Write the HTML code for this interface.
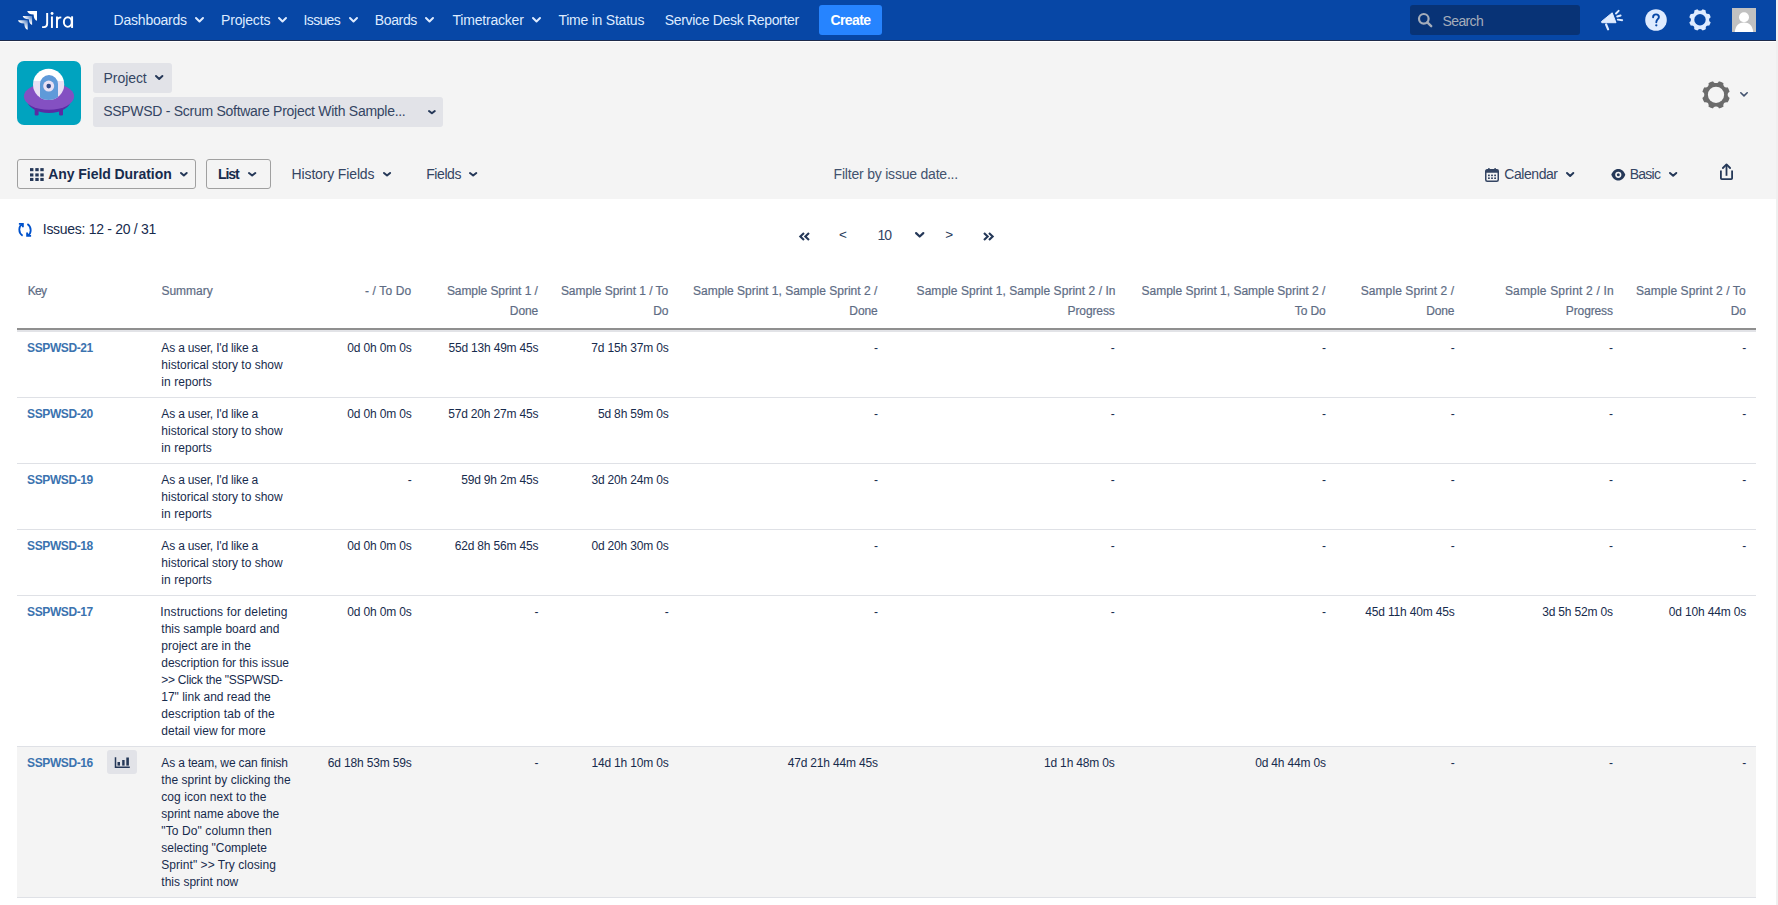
<!DOCTYPE html>
<html><head><meta charset="utf-8"><title>Jira - Time in Status</title>
<style>
html,body{margin:0;padding:0;}
body{width:1778px;height:905px;overflow:hidden;position:relative;background:#fff;font-family:"Liberation Sans", sans-serif;}
.t{position:absolute;white-space:nowrap;}
.r{position:absolute;}
svg.r{overflow:visible;}
</style></head><body>
<div class="r" style="left:0px;top:0px;width:1776px;height:40px;background:#0747a6;"></div>
<div class="r" style="left:0px;top:40px;width:1776px;height:1px;background:#1d2b4a;"></div>
<div class="r" style="left:0px;top:41px;width:1776px;height:1px;background:#ffffff;"></div>
<div class="r" style="left:0px;top:42px;width:1776px;height:157px;background:#f4f4f4;"></div>
<div class="r" style="left:1776px;top:0px;width:2px;height:905px;background:#f0f0f0;"></div>
<svg class="r" style="left:15px;top:8px" width="25" height="25" viewBox="0 0 25 25">
<defs>
<radialGradient id="g1" cx="1" cy="0" r="1.2"><stop offset="0" stop-color="#fff" stop-opacity="0.25"/><stop offset="0.4" stop-color="#fff" stop-opacity="0.7"/><stop offset="0.75" stop-color="#fff"/></radialGradient>
</defs>
<path d="M12.2 3 L22 3 L22 12.7 C20.2 12.4 18.8 10.6 18.6 6.5 C14.5 6.3 12.6 5 12.2 3 Z" fill="#fff"/>
<path d="M7.7 8 L17.1 8 L17.1 16.9 C15.4 16.6 14 14.8 13.8 11.3 C9.9 11.1 8.1 9.9 7.7 8 Z" fill="url(#g1)"/>
<path d="M3 12.2 L12.7 12.2 L12.7 21.8 C11 21.5 9.5 19.7 9.3 15.6 C5.2 15.4 3.4 14.1 3 12.2 Z" fill="url(#g1)"/>
</svg>
<svg class="r" style="left:40px;top:8px" width="36" height="24" viewBox="0 0 36 24">
<g fill="none" stroke="#fff" stroke-width="1.95">
<path d="M7.16 5.04 L7.16 15.6 C7.16 18.3 5.9 19.1 4 19.1 L2.1 19.1"/>
<path d="M11.93 8.45 L11.93 19.95"/>
<path d="M16.97 8.45 L16.97 19.95 M16.97 13.6 C16.97 10.5 18.5 9.35 21.3 9.35"/>
<ellipse cx="27.8" cy="14.05" rx="3.95" ry="4.8"/>
<path d="M32.08 8.3 L32.08 19.95"/>
</g>
<circle cx="12.06" cy="5.43" r="1.45" fill="#fff"/>
</svg>
<div class="t" style="left:113.60px;top:13.35px;font-size:14px;line-height:14px;color:#deebff;font-weight:400;letter-spacing:-0.221px;">Dashboards</div>
<svg class="r" style="left:194px;top:16px" width="11" height="7.5" viewBox="-1 -1 11 7.5"><path d="M1.0 1.0 L4.5 4.5 L8.0 1.0" fill="none" stroke="#deebff" stroke-width="2" stroke-linecap="round" stroke-linejoin="round"/></svg>
<div class="t" style="left:221.00px;top:13.35px;font-size:14px;line-height:14px;color:#deebff;font-weight:400;letter-spacing:-0.167px;">Projects</div>
<svg class="r" style="left:277px;top:16px" width="11" height="7.5" viewBox="-1 -1 11 7.5"><path d="M1.0 1.0 L4.5 4.5 L8.0 1.0" fill="none" stroke="#deebff" stroke-width="2" stroke-linecap="round" stroke-linejoin="round"/></svg>
<div class="t" style="left:303.60px;top:13.35px;font-size:14px;line-height:14px;color:#deebff;font-weight:400;letter-spacing:-0.672px;">Issues</div>
<svg class="r" style="left:348px;top:16px" width="11" height="7.5" viewBox="-1 -1 11 7.5"><path d="M1.0 1.0 L4.5 4.5 L8.0 1.0" fill="none" stroke="#deebff" stroke-width="2" stroke-linecap="round" stroke-linejoin="round"/></svg>
<div class="t" style="left:374.80px;top:13.35px;font-size:14px;line-height:14px;color:#deebff;font-weight:400;letter-spacing:-0.372px;">Boards</div>
<svg class="r" style="left:424px;top:16px" width="11" height="7.5" viewBox="-1 -1 11 7.5"><path d="M1.0 1.0 L4.5 4.5 L8.0 1.0" fill="none" stroke="#deebff" stroke-width="2" stroke-linecap="round" stroke-linejoin="round"/></svg>
<div class="t" style="left:452.50px;top:13.35px;font-size:14px;line-height:14px;color:#deebff;font-weight:400;letter-spacing:-0.201px;">Timetracker</div>
<svg class="r" style="left:531px;top:16px" width="11" height="7.5" viewBox="-1 -1 11 7.5"><path d="M1.0 1.0 L4.5 4.5 L8.0 1.0" fill="none" stroke="#deebff" stroke-width="2" stroke-linecap="round" stroke-linejoin="round"/></svg>
<div class="t" style="left:558.40px;top:13.35px;font-size:14px;line-height:14px;color:#deebff;font-weight:400;letter-spacing:-0.227px;">Time in Status</div>
<div class="t" style="left:664.70px;top:13.35px;font-size:14px;line-height:14px;color:#deebff;font-weight:400;letter-spacing:-0.318px;">Service Desk Reporter</div>
<div class="r" style="left:819px;top:5px;width:63px;height:30px;background:#2684ff;border-radius:3px"></div>
<div class="t" style="left:830.40px;top:13.35px;font-size:14px;line-height:14px;color:#ffffff;font-weight:700;letter-spacing:-0.599px;">Create</div>
<div class="r" style="left:1410px;top:5px;width:170px;height:30px;background:#083376;border-radius:3px"></div>
<svg class="r" style="left:1417px;top:12px" width="16" height="16" viewBox="0 0 16 16"><circle cx="6.8" cy="6.8" r="4.8" fill="none" stroke="#a5adba" stroke-width="2.2"/><path d="M10.3 10.3 L14.2 14.2" stroke="#a5adba" stroke-width="2.4" stroke-linecap="round"/></svg>
<div class="t" style="left:1442.50px;top:14.15px;font-size:14px;line-height:14px;color:#a5adba;font-weight:400;letter-spacing:-0.614px;">Search</div>
<svg class="r" style="left:1600px;top:9px" width="24" height="22" viewBox="0 0 24 22">
<path d="M1.5 12.5 L12.2 3.8 L16 13.7 L1.8 13.7 Z" fill="#deebff" stroke="#deebff" stroke-width="1" stroke-linejoin="round"/>
<path d="M6.1 15.5 L8.1 20.3" stroke="#deebff" stroke-width="2.2" stroke-linecap="round"/>
<path d="M16 4.5 L18.6 1.8 M17.2 7.5 L20.6 6.5 M17.8 10.6 L22.2 11.2" stroke="#deebff" stroke-width="1.9" stroke-linecap="round"/>
</svg>
<svg class="r" style="left:1645px;top:9px" width="22" height="22" viewBox="0 0 22 22">
<circle cx="11" cy="11" r="10.8" fill="#deebff"/>
<path d="M8.1 8.2 C8.1 6.5 9.4 5.4 11 5.4 C12.7 5.4 13.9 6.5 13.9 8 C13.9 10.1 11.3 10.4 11.3 13.2" fill="none" stroke="#0747a6" stroke-width="1.9" stroke-linecap="round"/>
<circle cx="11.3" cy="16.3" r="1.15" fill="#0747a6"/>
</svg>
<svg class="r" style="left:1689px;top:9px" width="22" height="22" viewBox="0 0 22 22"><defs><mask id="gm1"><rect width="22" height="22" fill="#000"/><circle cx="11" cy="10.8" r="10.9" fill="#fff"/><circle cx="22.60" cy="10.80" r="2.5" fill="#000"/><circle cx="19.20" cy="19.00" r="2.5" fill="#000"/><circle cx="11.00" cy="22.40" r="2.5" fill="#000"/><circle cx="2.80" cy="19.00" r="2.5" fill="#000"/><circle cx="-0.60" cy="10.80" r="2.5" fill="#000"/><circle cx="2.80" cy="2.60" r="2.5" fill="#000"/><circle cx="11.00" cy="-0.80" r="2.5" fill="#000"/><circle cx="19.20" cy="2.60" r="2.5" fill="#000"/><circle cx="11" cy="10.8" r="5.7" fill="#000"/></mask></defs><rect width="22" height="22" fill="#deebff" mask="url(#gm1)"/></svg>
<svg class="r" style="left:1732px;top:8px" width="24" height="24" viewBox="0 0 24 24">
<rect width="24" height="24" fill="#c1c1c1"/>
<circle cx="12" cy="9.3" r="5" fill="#fff"/>
<path d="M2.8 24 C3.5 17.5 7 14.6 12 14.6 C17 14.6 20.5 17.5 21.2 24 Z" fill="#fff"/>
</svg>
<svg class="r" style="left:17px;top:61px" width="64" height="64" viewBox="0 0 64 64">
<defs><clipPath id="dome"><circle cx="31.6" cy="23.4" r="15.6"/></clipPath></defs>
<rect width="64" height="64" rx="7" fill="#00a3bf"/>
<rect x="17.7" y="44" width="3.9" height="10.5" rx="1.2" fill="#5b2aa3"/>
<rect x="42.1" y="44" width="3.9" height="10.5" rx="1.2" fill="#5b2aa3"/>
<ellipse cx="32" cy="38.6" rx="22" ry="13.4" fill="#5b2aa3"/>
<ellipse cx="32" cy="35.4" rx="25.1" ry="13.4" fill="#8450c2"/>
<g clip-path="url(#dome)">
<rect x="14" y="6" width="36" height="14" fill="#ffffff"/>
<rect x="14" y="20" width="36" height="22" fill="#e9e1f4"/>
<path d="M23 40 L23 23.1 A9 9 0 0 1 41 23.1 L41 40 Z" fill="#5f9ad9"/>
</g>
<circle cx="31.7" cy="25.1" r="5.5" fill="#e9e1f4"/>
<circle cx="31.7" cy="25.1" r="2.3" fill="#2e4a8c"/>
</svg>
<div class="r" style="left:93px;top:63px;width:79px;height:30px;background:#e2e3e8;border-radius:3px"></div>
<div class="t" style="left:103.60px;top:70.85px;font-size:14px;line-height:14px;color:#344563;font-weight:400;letter-spacing:-0.080px;">Project</div>
<svg class="r" style="left:153.6px;top:74.4px" width="10.4" height="7" viewBox="-1 -1 10.4 7"><path d="M1.0 1.0 L4.2 4.0 L7.4 1.0" fill="none" stroke="#253858" stroke-width="2" stroke-linecap="round" stroke-linejoin="round"/></svg>
<div class="r" style="left:93px;top:97px;width:350px;height:30px;background:#e2e3e8;border-radius:3px"></div>
<div class="t" style="left:103.20px;top:104.45px;font-size:14px;line-height:14px;color:#344563;font-weight:400;letter-spacing:-0.278px;">SSPWSD - Scrum Software Project With Sample...</div>
<svg class="r" style="left:427px;top:109px" width="9.8" height="6.3" viewBox="-1 -1 9.8 6.3"><path d="M1.0 1.0 L3.9 3.3 L6.8 1.0" fill="none" stroke="#253858" stroke-width="2" stroke-linecap="round" stroke-linejoin="round"/></svg>
<svg class="r" style="left:1701px;top:80px" width="30" height="30" viewBox="0 0 30 30"><defs><mask id="gm2"><rect width="30" height="30" fill="#000"/><circle cx="15" cy="14.8" r="13.9" fill="#fff"/><circle cx="29.80" cy="14.80" r="3.1" fill="#000"/><circle cx="25.47" cy="25.27" r="3.1" fill="#000"/><circle cx="15.00" cy="29.60" r="3.1" fill="#000"/><circle cx="4.53" cy="25.27" r="3.1" fill="#000"/><circle cx="0.20" cy="14.80" r="3.1" fill="#000"/><circle cx="4.53" cy="4.33" r="3.1" fill="#000"/><circle cx="15.00" cy="0.00" r="3.1" fill="#000"/><circle cx="25.47" cy="4.33" r="3.1" fill="#000"/><circle cx="15" cy="14.8" r="8.1" fill="#000"/></mask></defs><rect width="30" height="30" fill="#6b6b6b" mask="url(#gm2)"/></svg>
<svg class="r" style="left:1739px;top:91.4px" width="10" height="6.7" viewBox="-1 -1 10 6.7"><path d="M0.8 0.8 L4.0 3.9000000000000004 L7.2 0.8" fill="none" stroke="#42526e" stroke-width="1.6" stroke-linecap="round" stroke-linejoin="round"/></svg>
<div class="r" style="left:17px;top:159px;width:179px;height:30px;background:transparent;border:1px solid #a0a0a0;border-radius:3px;box-sizing:border-box"></div>
<svg class="r" style="left:30px;top:168px" width="14" height="14" viewBox="0 0 14 14"><rect x="0" y="0.1" width="3.4" height="3.1" fill="#253858"/><rect x="0" y="5.4" width="3.4" height="3.1" fill="#253858"/><rect x="0" y="9.9" width="3.4" height="3.1" fill="#253858"/><rect x="5.3" y="0.1" width="3.4" height="3.1" fill="#253858"/><rect x="5.3" y="5.4" width="3.4" height="3.1" fill="#253858"/><rect x="5.3" y="9.9" width="3.4" height="3.1" fill="#253858"/><rect x="10.3" y="0.1" width="3.4" height="3.1" fill="#253858"/><rect x="10.3" y="5.4" width="3.4" height="3.1" fill="#253858"/><rect x="10.3" y="9.9" width="3.4" height="3.1" fill="#253858"/></svg>
<div class="t" style="left:48.20px;top:167.15px;font-size:14px;line-height:14px;color:#172b4d;font-weight:700;letter-spacing:-0.053px;">Any Field Duration</div>
<svg class="r" style="left:178.6px;top:170.7px" width="9.7" height="6.5" viewBox="-1 -1 9.7 6.5"><path d="M1.0 1.0 L3.85 3.5 L6.7 1.0" fill="none" stroke="#253858" stroke-width="2" stroke-linecap="round" stroke-linejoin="round"/></svg>
<div class="r" style="left:206px;top:159px;width:65px;height:30px;background:transparent;border:1px solid #a0a0a0;border-radius:3px;box-sizing:border-box"></div>
<div class="t" style="left:218.00px;top:167.15px;font-size:14px;line-height:14px;color:#172b4d;font-weight:700;letter-spacing:-1.076px;">List</div>
<svg class="r" style="left:247px;top:171px" width="10.3" height="6.5" viewBox="-1 -1 10.3 6.5"><path d="M1.0 1.0 L4.15 3.5 L7.300000000000001 1.0" fill="none" stroke="#253858" stroke-width="2" stroke-linecap="round" stroke-linejoin="round"/></svg>
<div class="t" style="left:291.60px;top:167.15px;font-size:14px;line-height:14px;color:#344563;font-weight:400;letter-spacing:-0.146px;">History Fields</div>
<svg class="r" style="left:381.7px;top:171px" width="10.1" height="6.5" viewBox="-1 -1 10.1 6.5"><path d="M1.0 1.0 L4.05 3.5 L7.1 1.0" fill="none" stroke="#253858" stroke-width="2" stroke-linecap="round" stroke-linejoin="round"/></svg>
<div class="t" style="left:426.20px;top:167.15px;font-size:14px;line-height:14px;color:#344563;font-weight:400;letter-spacing:-0.409px;">Fields</div>
<svg class="r" style="left:468px;top:171px" width="10.3" height="6.5" viewBox="-1 -1 10.3 6.5"><path d="M1.0 1.0 L4.15 3.5 L7.300000000000001 1.0" fill="none" stroke="#253858" stroke-width="2" stroke-linecap="round" stroke-linejoin="round"/></svg>
<div class="t" style="left:833.60px;top:167.05px;font-size:14px;line-height:14px;color:#42526e;font-weight:400;letter-spacing:-0.208px;">Filter by issue date...</div>
<svg class="r" style="left:1485px;top:168px" width="14" height="14" viewBox="0 0 14 14">
<rect x="0.75" y="1.75" width="12.5" height="11.5" rx="1.5" fill="none" stroke="#344563" stroke-width="1.5"/>
<rect x="0.75" y="1.75" width="12.5" height="3" fill="#344563"/>
<rect x="3.2" y="0" width="1.4" height="3" fill="#344563"/><rect x="9.4" y="0" width="1.4" height="3" fill="#344563"/>
<rect x="3" y="6.6" width="1.8" height="1.6" fill="#344563"/><rect x="6.1" y="6.6" width="1.8" height="1.6" fill="#344563"/><rect x="9.2" y="6.6" width="1.8" height="1.6" fill="#344563"/>
<rect x="3" y="9.4" width="1.8" height="1.6" fill="#344563"/><rect x="6.1" y="9.4" width="1.8" height="1.6" fill="#344563"/><rect x="9.2" y="9.4" width="1.8" height="1.6" fill="#344563"/>
</svg>
<div class="t" style="left:1504.30px;top:166.95px;font-size:14px;line-height:14px;color:#344563;font-weight:400;letter-spacing:-0.450px;">Calendar</div>
<svg class="r" style="left:1565.2px;top:171.1px" width="10.3" height="7" viewBox="-1 -1 10.3 7"><path d="M1.0 1.0 L4.15 4.0 L7.300000000000001 1.0" fill="none" stroke="#253858" stroke-width="2" stroke-linecap="round" stroke-linejoin="round"/></svg>
<svg class="r" style="left:1611px;top:169px" width="15" height="12" viewBox="0 0 15 12">
<path d="M0.3 5.8 C2 1.6 4.6 0.1 7.3 0.1 C10 0.1 12.6 1.6 14.3 5.8 C12.6 10 10 11.6 7.3 11.6 C4.6 11.6 2 10 0.3 5.8 Z" fill="#253858"/>
<circle cx="7.3" cy="5.8" r="3.1" fill="#f4f4f4"/>
<circle cx="7.3" cy="5.8" r="1.5" fill="#253858"/>
</svg>
<div class="t" style="left:1629.70px;top:166.75px;font-size:14px;line-height:14px;color:#344563;font-weight:400;letter-spacing:-0.734px;">Basic</div>
<svg class="r" style="left:1667.9px;top:170.5px" width="10.3" height="6.8" viewBox="-1 -1 10.3 6.8"><path d="M1.0 1.0 L4.15 3.8 L7.300000000000001 1.0" fill="none" stroke="#253858" stroke-width="2" stroke-linecap="round" stroke-linejoin="round"/></svg>
<svg class="r" style="left:1719px;top:163px" width="15" height="18" viewBox="0 0 15 18">
<path d="M1.9 7.6 L1.9 15.2 Q1.9 16.1 2.8 16.1 L12.2 16.1 Q13.1 16.1 13.1 15.2 L13.1 7.6" fill="none" stroke="#253858" stroke-width="1.8"/>
<path d="M7.5 12.8 L7.5 1.8" stroke="#253858" stroke-width="1.8"/>
<path d="M3.9 5 L7.5 1.4 L11.1 5" fill="none" stroke="#253858" stroke-width="1.8" stroke-linejoin="round" stroke-linecap="round"/>
</svg>
<svg class="r" style="left:18px;top:223px" width="14" height="14" viewBox="0 0 14 14">
<path d="M4.3 1.3 C0.4 2.9 0.1 9.8 4.6 12.7" fill="none" stroke="#0052cc" stroke-width="1.8"/>
<path d="M0.9 0.9 L4.9 0.9 L4.9 4.3" fill="none" stroke="#0052cc" stroke-width="1.8"/>
<path d="M9.7 12.5 C13.6 10.9 13.9 4 9.4 1.1" fill="none" stroke="#0052cc" stroke-width="1.8"/>
<path d="M13.1 12.9 L9.1 12.9 L9.1 9.5" fill="none" stroke="#0052cc" stroke-width="1.8"/>
</svg>
<div class="t" style="left:42.80px;top:222.05px;font-size:14px;line-height:14px;color:#172b4d;font-weight:400;letter-spacing:-0.299px;">Issues: 12 - 20 / 31</div>
<svg class="r" style="left:799px;top:231.5px" width="11" height="9" viewBox="0 0 11 9"><path d="M5 0.9 L1.3 4.5 L5 8.1 M10 0.9 L6.3 4.5 L10 8.1" fill="none" stroke="#253858" stroke-width="2.1" stroke-linejoin="miter"/></svg>
<div class="t" style="left:839.00px;top:227.87px;font-size:13.5px;line-height:13.5px;color:#253858;font-weight:400;letter-spacing:0.000px;">&lt;</div>
<div class="t" style="left:877.60px;top:227.95px;font-size:14px;line-height:14px;color:#344563;font-weight:400;letter-spacing:-1.186px;">10</div>
<svg class="r" style="left:914.2px;top:230.5px" width="11.4" height="7.6" viewBox="-1 -1 11.4 7.6"><path d="M1.1 1.1 L4.7 4.5 L8.3 1.1" fill="none" stroke="#253858" stroke-width="2.2" stroke-linecap="round" stroke-linejoin="round"/></svg>
<div class="t" style="left:945.30px;top:227.87px;font-size:13.5px;line-height:13.5px;color:#253858;font-weight:400;letter-spacing:0.000px;">&gt;</div>
<svg class="r" style="left:982.5px;top:231.5px" width="11" height="9" viewBox="0 0 11 9"><path d="M1 0.9 L4.7 4.5 L1 8.1 M6 0.9 L9.7 4.5 L6 8.1" fill="none" stroke="#253858" stroke-width="2.1" stroke-linejoin="miter"/></svg>
<div class="r" style="left:17px;top:328px;width:1739px;height:2px;background:#8f8f8f;"></div>
<div class="r" style="left:17px;top:330px;width:1739px;height:2px;background:#e2e3e7;"></div>
<div class="t" style="left:27.70px;top:284.84px;font-size:12px;line-height:12px;color:#5e6c84;font-weight:400;letter-spacing:-0.689px;-webkit-text-stroke:0.2px #5e6c84">Key</div>
<div class="t" style="left:161.40px;top:284.84px;font-size:12px;line-height:12px;color:#5e6c84;font-weight:400;letter-spacing:-0.007px;-webkit-text-stroke:0.2px #5e6c84">Summary</div>
<div class="t" style="left:365.00px;top:284.84px;font-size:12px;line-height:12px;color:#5e6c84;font-weight:400;letter-spacing:0.129px;-webkit-text-stroke:0.2px #5e6c84">- / To Do</div>
<div class="t" style="left:446.90px;top:284.84px;font-size:12px;line-height:12px;color:#5e6c84;font-weight:400;letter-spacing:-0.069px;-webkit-text-stroke:0.2px #5e6c84">Sample Sprint 1 /</div>
<div class="t" style="left:509.85px;top:304.84px;font-size:12px;line-height:12px;color:#5e6c84;font-weight:400;letter-spacing:-0.120px;-webkit-text-stroke:0.2px #5e6c84">Done</div>
<div class="t" style="left:560.90px;top:284.84px;font-size:12px;line-height:12px;color:#5e6c84;font-weight:400;letter-spacing:-0.025px;-webkit-text-stroke:0.2px #5e6c84">Sample Sprint 1 / To</div>
<div class="t" style="left:653.25px;top:304.84px;font-size:12px;line-height:12px;color:#5e6c84;font-weight:400;letter-spacing:-0.120px;-webkit-text-stroke:0.2px #5e6c84">Do</div>
<div class="t" style="left:693.00px;top:284.84px;font-size:12px;line-height:12px;color:#5e6c84;font-weight:400;letter-spacing:0.007px;-webkit-text-stroke:0.2px #5e6c84">Sample Sprint 1, Sample Sprint 2 /</div>
<div class="t" style="left:849.35px;top:304.84px;font-size:12px;line-height:12px;color:#5e6c84;font-weight:400;letter-spacing:-0.120px;-webkit-text-stroke:0.2px #5e6c84">Done</div>
<div class="t" style="left:916.60px;top:284.84px;font-size:12px;line-height:12px;color:#5e6c84;font-weight:400;letter-spacing:0.040px;-webkit-text-stroke:0.2px #5e6c84">Sample Sprint 1, Sample Sprint 2 / In</div>
<div class="t" style="left:1067.62px;top:304.84px;font-size:12px;line-height:12px;color:#5e6c84;font-weight:400;letter-spacing:-0.120px;-webkit-text-stroke:0.2px #5e6c84">Progress</div>
<div class="t" style="left:1141.50px;top:284.84px;font-size:12px;line-height:12px;color:#5e6c84;font-weight:400;letter-spacing:-0.008px;-webkit-text-stroke:0.2px #5e6c84">Sample Sprint 1, Sample Sprint 2 /</div>
<div class="t" style="left:1294.81px;top:304.84px;font-size:12px;line-height:12px;color:#5e6c84;font-weight:400;letter-spacing:-0.120px;-webkit-text-stroke:0.2px #5e6c84">To Do</div>
<div class="t" style="left:1360.70px;top:284.84px;font-size:12px;line-height:12px;color:#5e6c84;font-weight:400;letter-spacing:0.087px;-webkit-text-stroke:0.2px #5e6c84">Sample Sprint 2 /</div>
<div class="t" style="left:1426.15px;top:304.84px;font-size:12px;line-height:12px;color:#5e6c84;font-weight:400;letter-spacing:-0.120px;-webkit-text-stroke:0.2px #5e6c84">Done</div>
<div class="t" style="left:1504.90px;top:284.84px;font-size:12px;line-height:12px;color:#5e6c84;font-weight:400;letter-spacing:0.178px;-webkit-text-stroke:0.2px #5e6c84">Sample Sprint 2 / In</div>
<div class="t" style="left:1565.82px;top:304.84px;font-size:12px;line-height:12px;color:#5e6c84;font-weight:400;letter-spacing:-0.120px;-webkit-text-stroke:0.2px #5e6c84">Progress</div>
<div class="t" style="left:1635.90px;top:284.84px;font-size:12px;line-height:12px;color:#5e6c84;font-weight:400;letter-spacing:0.101px;-webkit-text-stroke:0.2px #5e6c84">Sample Sprint 2 / To</div>
<div class="t" style="left:1730.65px;top:304.84px;font-size:12px;line-height:12px;color:#5e6c84;font-weight:400;letter-spacing:-0.120px;-webkit-text-stroke:0.2px #5e6c84">Do</div>
<div class="r" style="left:17px;top:397px;width:1739px;height:1px;background:#dfe1e6;"></div>
<div class="t" style="left:27.10px;top:342.34px;font-size:12px;line-height:12px;color:#3b73af;font-weight:700;letter-spacing:-0.410px;">SSPWSD-21</div>
<div class="t" style="left:161.30px;top:342.34px;font-size:12px;line-height:12px;color:#172b4d;font-weight:400;letter-spacing:-0.168px;">As a user, I'd like a</div>
<div class="t" style="left:161.30px;top:359.34px;font-size:12px;line-height:12px;color:#172b4d;font-weight:400;letter-spacing:-0.000px;">historical story to show</div>
<div class="t" style="left:161.30px;top:376.34px;font-size:12px;line-height:12px;color:#172b4d;font-weight:400;letter-spacing:0.053px;">in reports</div>
<div class="t" style="left:347.30px;top:342.34px;font-size:12px;line-height:12px;color:#172b4d;font-weight:400;letter-spacing:-0.164px;">0d 0h 0m 0s</div>
<div class="t" style="left:448.50px;top:342.34px;font-size:12px;line-height:12px;color:#172b4d;font-weight:400;letter-spacing:-0.195px;">55d 13h 49m 45s</div>
<div class="t" style="left:591.20px;top:342.34px;font-size:12px;line-height:12px;color:#172b4d;font-weight:400;letter-spacing:-0.149px;">7d 15h 37m 0s</div>
<div class="t" style="left:874.00px;top:342.14px;font-size:12px;line-height:12px;color:#172b4d;font-weight:400;letter-spacing:0.000px;">-</div>
<div class="t" style="left:1110.80px;top:342.14px;font-size:12px;line-height:12px;color:#172b4d;font-weight:400;letter-spacing:0.000px;">-</div>
<div class="t" style="left:1322.00px;top:342.14px;font-size:12px;line-height:12px;color:#172b4d;font-weight:400;letter-spacing:0.000px;">-</div>
<div class="t" style="left:1450.80px;top:342.14px;font-size:12px;line-height:12px;color:#172b4d;font-weight:400;letter-spacing:0.000px;">-</div>
<div class="t" style="left:1609.00px;top:342.14px;font-size:12px;line-height:12px;color:#172b4d;font-weight:400;letter-spacing:0.000px;">-</div>
<div class="t" style="left:1742.20px;top:342.14px;font-size:12px;line-height:12px;color:#172b4d;font-weight:400;letter-spacing:0.000px;">-</div>
<div class="r" style="left:17px;top:463px;width:1739px;height:1px;background:#dfe1e6;"></div>
<div class="t" style="left:27.10px;top:408.34px;font-size:12px;line-height:12px;color:#3b73af;font-weight:700;letter-spacing:-0.410px;">SSPWSD-20</div>
<div class="t" style="left:161.30px;top:408.34px;font-size:12px;line-height:12px;color:#172b4d;font-weight:400;letter-spacing:-0.168px;">As a user, I'd like a</div>
<div class="t" style="left:161.30px;top:425.34px;font-size:12px;line-height:12px;color:#172b4d;font-weight:400;letter-spacing:-0.000px;">historical story to show</div>
<div class="t" style="left:161.30px;top:442.34px;font-size:12px;line-height:12px;color:#172b4d;font-weight:400;letter-spacing:0.053px;">in reports</div>
<div class="t" style="left:347.30px;top:408.34px;font-size:12px;line-height:12px;color:#172b4d;font-weight:400;letter-spacing:-0.164px;">0d 0h 0m 0s</div>
<div class="t" style="left:448.14px;top:408.34px;font-size:12px;line-height:12px;color:#172b4d;font-weight:400;letter-spacing:-0.170px;">57d 20h 27m 45s</div>
<div class="t" style="left:597.96px;top:408.34px;font-size:12px;line-height:12px;color:#172b4d;font-weight:400;letter-spacing:-0.170px;">5d 8h 59m 0s</div>
<div class="t" style="left:874.00px;top:408.14px;font-size:12px;line-height:12px;color:#172b4d;font-weight:400;letter-spacing:0.000px;">-</div>
<div class="t" style="left:1110.80px;top:408.14px;font-size:12px;line-height:12px;color:#172b4d;font-weight:400;letter-spacing:0.000px;">-</div>
<div class="t" style="left:1322.00px;top:408.14px;font-size:12px;line-height:12px;color:#172b4d;font-weight:400;letter-spacing:0.000px;">-</div>
<div class="t" style="left:1450.80px;top:408.14px;font-size:12px;line-height:12px;color:#172b4d;font-weight:400;letter-spacing:0.000px;">-</div>
<div class="t" style="left:1609.00px;top:408.14px;font-size:12px;line-height:12px;color:#172b4d;font-weight:400;letter-spacing:0.000px;">-</div>
<div class="t" style="left:1742.20px;top:408.14px;font-size:12px;line-height:12px;color:#172b4d;font-weight:400;letter-spacing:0.000px;">-</div>
<div class="r" style="left:17px;top:529px;width:1739px;height:1px;background:#dfe1e6;"></div>
<div class="t" style="left:27.10px;top:474.34px;font-size:12px;line-height:12px;color:#3b73af;font-weight:700;letter-spacing:-0.410px;">SSPWSD-19</div>
<div class="t" style="left:161.30px;top:474.34px;font-size:12px;line-height:12px;color:#172b4d;font-weight:400;letter-spacing:-0.168px;">As a user, I'd like a</div>
<div class="t" style="left:161.30px;top:491.34px;font-size:12px;line-height:12px;color:#172b4d;font-weight:400;letter-spacing:-0.000px;">historical story to show</div>
<div class="t" style="left:161.30px;top:508.34px;font-size:12px;line-height:12px;color:#172b4d;font-weight:400;letter-spacing:0.053px;">in reports</div>
<div class="t" style="left:407.70px;top:474.14px;font-size:12px;line-height:12px;color:#172b4d;font-weight:400;letter-spacing:0.000px;">-</div>
<div class="t" style="left:461.15px;top:474.34px;font-size:12px;line-height:12px;color:#172b4d;font-weight:400;letter-spacing:-0.170px;">59d 9h 2m 45s</div>
<div class="t" style="left:591.45px;top:474.34px;font-size:12px;line-height:12px;color:#172b4d;font-weight:400;letter-spacing:-0.170px;">3d 20h 24m 0s</div>
<div class="t" style="left:874.00px;top:474.14px;font-size:12px;line-height:12px;color:#172b4d;font-weight:400;letter-spacing:0.000px;">-</div>
<div class="t" style="left:1110.80px;top:474.14px;font-size:12px;line-height:12px;color:#172b4d;font-weight:400;letter-spacing:0.000px;">-</div>
<div class="t" style="left:1322.00px;top:474.14px;font-size:12px;line-height:12px;color:#172b4d;font-weight:400;letter-spacing:0.000px;">-</div>
<div class="t" style="left:1450.80px;top:474.14px;font-size:12px;line-height:12px;color:#172b4d;font-weight:400;letter-spacing:0.000px;">-</div>
<div class="t" style="left:1609.00px;top:474.14px;font-size:12px;line-height:12px;color:#172b4d;font-weight:400;letter-spacing:0.000px;">-</div>
<div class="t" style="left:1742.20px;top:474.14px;font-size:12px;line-height:12px;color:#172b4d;font-weight:400;letter-spacing:0.000px;">-</div>
<div class="r" style="left:17px;top:595px;width:1739px;height:1px;background:#dfe1e6;"></div>
<div class="t" style="left:27.10px;top:540.34px;font-size:12px;line-height:12px;color:#3b73af;font-weight:700;letter-spacing:-0.410px;">SSPWSD-18</div>
<div class="t" style="left:161.30px;top:540.34px;font-size:12px;line-height:12px;color:#172b4d;font-weight:400;letter-spacing:-0.168px;">As a user, I'd like a</div>
<div class="t" style="left:161.30px;top:557.34px;font-size:12px;line-height:12px;color:#172b4d;font-weight:400;letter-spacing:-0.000px;">historical story to show</div>
<div class="t" style="left:161.30px;top:574.34px;font-size:12px;line-height:12px;color:#172b4d;font-weight:400;letter-spacing:0.053px;">in reports</div>
<div class="t" style="left:347.30px;top:540.34px;font-size:12px;line-height:12px;color:#172b4d;font-weight:400;letter-spacing:-0.164px;">0d 0h 0m 0s</div>
<div class="t" style="left:454.65px;top:540.34px;font-size:12px;line-height:12px;color:#172b4d;font-weight:400;letter-spacing:-0.170px;">62d 8h 56m 45s</div>
<div class="t" style="left:591.45px;top:540.34px;font-size:12px;line-height:12px;color:#172b4d;font-weight:400;letter-spacing:-0.170px;">0d 20h 30m 0s</div>
<div class="t" style="left:874.00px;top:540.14px;font-size:12px;line-height:12px;color:#172b4d;font-weight:400;letter-spacing:0.000px;">-</div>
<div class="t" style="left:1110.80px;top:540.14px;font-size:12px;line-height:12px;color:#172b4d;font-weight:400;letter-spacing:0.000px;">-</div>
<div class="t" style="left:1322.00px;top:540.14px;font-size:12px;line-height:12px;color:#172b4d;font-weight:400;letter-spacing:0.000px;">-</div>
<div class="t" style="left:1450.80px;top:540.14px;font-size:12px;line-height:12px;color:#172b4d;font-weight:400;letter-spacing:0.000px;">-</div>
<div class="t" style="left:1609.00px;top:540.14px;font-size:12px;line-height:12px;color:#172b4d;font-weight:400;letter-spacing:0.000px;">-</div>
<div class="t" style="left:1742.20px;top:540.14px;font-size:12px;line-height:12px;color:#172b4d;font-weight:400;letter-spacing:0.000px;">-</div>
<div class="r" style="left:17px;top:746px;width:1739px;height:1px;background:#dfe1e6;"></div>
<div class="t" style="left:27.10px;top:606.34px;font-size:12px;line-height:12px;color:#3b73af;font-weight:700;letter-spacing:-0.410px;">SSPWSD-17</div>
<div class="t" style="left:160.30px;top:606.34px;font-size:12px;line-height:12px;color:#172b4d;font-weight:400;letter-spacing:0.129px;">Instructions for deleting</div>
<div class="t" style="left:161.30px;top:623.34px;font-size:12px;line-height:12px;color:#172b4d;font-weight:400;letter-spacing:0.005px;">this sample board and</div>
<div class="t" style="left:161.30px;top:640.34px;font-size:12px;line-height:12px;color:#172b4d;font-weight:400;letter-spacing:0.017px;">project are in the</div>
<div class="t" style="left:161.30px;top:657.34px;font-size:12px;line-height:12px;color:#172b4d;font-weight:400;letter-spacing:-0.042px;">description for this issue</div>
<div class="t" style="left:161.30px;top:674.34px;font-size:12px;line-height:12px;color:#172b4d;font-weight:400;letter-spacing:-0.258px;">&gt;&gt; Click the "SSPWSD-</div>
<div class="t" style="left:161.30px;top:691.34px;font-size:12px;line-height:12px;color:#172b4d;font-weight:400;letter-spacing:-0.010px;">17" link and read the</div>
<div class="t" style="left:161.30px;top:708.34px;font-size:12px;line-height:12px;color:#172b4d;font-weight:400;letter-spacing:0.089px;">description tab of the</div>
<div class="t" style="left:161.30px;top:725.34px;font-size:12px;line-height:12px;color:#172b4d;font-weight:400;letter-spacing:0.023px;">detail view for more</div>
<div class="t" style="left:347.30px;top:606.34px;font-size:12px;line-height:12px;color:#172b4d;font-weight:400;letter-spacing:-0.164px;">0d 0h 0m 0s</div>
<div class="t" style="left:534.50px;top:606.14px;font-size:12px;line-height:12px;color:#172b4d;font-weight:400;letter-spacing:0.000px;">-</div>
<div class="t" style="left:664.80px;top:606.14px;font-size:12px;line-height:12px;color:#172b4d;font-weight:400;letter-spacing:0.000px;">-</div>
<div class="t" style="left:874.00px;top:606.14px;font-size:12px;line-height:12px;color:#172b4d;font-weight:400;letter-spacing:0.000px;">-</div>
<div class="t" style="left:1110.80px;top:606.14px;font-size:12px;line-height:12px;color:#172b4d;font-weight:400;letter-spacing:0.000px;">-</div>
<div class="t" style="left:1322.00px;top:606.14px;font-size:12px;line-height:12px;color:#172b4d;font-weight:400;letter-spacing:0.000px;">-</div>
<div class="t" style="left:1365.33px;top:606.34px;font-size:12px;line-height:12px;color:#172b4d;font-weight:400;letter-spacing:-0.170px;">45d 11h 40m 45s</div>
<div class="t" style="left:1542.16px;top:606.34px;font-size:12px;line-height:12px;color:#172b4d;font-weight:400;letter-spacing:-0.170px;">3d 5h 52m 0s</div>
<div class="t" style="left:1668.85px;top:606.34px;font-size:12px;line-height:12px;color:#172b4d;font-weight:400;letter-spacing:-0.170px;">0d 10h 44m 0s</div>
<div class="r" style="left:17px;top:747px;width:1739px;height:150px;background:#f4f4f4;"></div>
<div class="r" style="left:17px;top:897px;width:1739px;height:1px;background:#dfe1e6;"></div>
<div class="t" style="left:27.10px;top:757.34px;font-size:12px;line-height:12px;color:#3b73af;font-weight:700;letter-spacing:-0.410px;">SSPWSD-16</div>
<div class="t" style="left:161.30px;top:757.34px;font-size:12px;line-height:12px;color:#172b4d;font-weight:400;letter-spacing:-0.147px;">As a team, we can finish</div>
<div class="t" style="left:161.30px;top:774.34px;font-size:12px;line-height:12px;color:#172b4d;font-weight:400;letter-spacing:0.048px;">the sprint by clicking the</div>
<div class="t" style="left:161.30px;top:791.34px;font-size:12px;line-height:12px;color:#172b4d;font-weight:400;letter-spacing:0.053px;">cog icon next to the</div>
<div class="t" style="left:161.30px;top:808.34px;font-size:12px;line-height:12px;color:#172b4d;font-weight:400;letter-spacing:-0.038px;">sprint name above the</div>
<div class="t" style="left:161.30px;top:825.34px;font-size:12px;line-height:12px;color:#172b4d;font-weight:400;letter-spacing:0.106px;">"To Do" column then</div>
<div class="t" style="left:161.30px;top:842.34px;font-size:12px;line-height:12px;color:#172b4d;font-weight:400;letter-spacing:-0.041px;">selecting "Complete</div>
<div class="t" style="left:161.30px;top:859.34px;font-size:12px;line-height:12px;color:#172b4d;font-weight:400;letter-spacing:0.044px;">Sprint" &gt;&gt; Try closing</div>
<div class="t" style="left:161.30px;top:876.34px;font-size:12px;line-height:12px;color:#172b4d;font-weight:400;letter-spacing:0.019px;">this sprint now</div>
<div class="t" style="left:327.85px;top:757.34px;font-size:12px;line-height:12px;color:#172b4d;font-weight:400;letter-spacing:-0.170px;">6d 18h 53m 59s</div>
<div class="t" style="left:534.50px;top:757.14px;font-size:12px;line-height:12px;color:#172b4d;font-weight:400;letter-spacing:0.000px;">-</div>
<div class="t" style="left:591.45px;top:757.34px;font-size:12px;line-height:12px;color:#172b4d;font-weight:400;letter-spacing:-0.170px;">14d 1h 10m 0s</div>
<div class="t" style="left:787.64px;top:757.34px;font-size:12px;line-height:12px;color:#172b4d;font-weight:400;letter-spacing:-0.170px;">47d 21h 44m 45s</div>
<div class="t" style="left:1043.96px;top:757.34px;font-size:12px;line-height:12px;color:#172b4d;font-weight:400;letter-spacing:-0.170px;">1d 1h 48m 0s</div>
<div class="t" style="left:1255.16px;top:757.34px;font-size:12px;line-height:12px;color:#172b4d;font-weight:400;letter-spacing:-0.170px;">0d 4h 44m 0s</div>
<div class="t" style="left:1450.80px;top:757.14px;font-size:12px;line-height:12px;color:#172b4d;font-weight:400;letter-spacing:0.000px;">-</div>
<div class="t" style="left:1609.00px;top:757.14px;font-size:12px;line-height:12px;color:#172b4d;font-weight:400;letter-spacing:0.000px;">-</div>
<div class="t" style="left:1742.20px;top:757.14px;font-size:12px;line-height:12px;color:#172b4d;font-weight:400;letter-spacing:0.000px;">-</div>
<div class="r" style="left:107px;top:750px;width:30px;height:24px;background:#e2e3e8;border-radius:3px"></div>
<svg class="r" style="left:114px;top:757px" width="17" height="12" viewBox="0 0 17 12">
<path d="M1.5 0.3 L1.5 10.2 L15.8 10.2" fill="none" stroke="#253858" stroke-width="1.5"/>
<rect x="3.5" y="5" width="2.5" height="3.6" fill="#253858"/>
<rect x="8.2" y="3" width="2.4" height="5.6" fill="#253858"/>
<rect x="12.3" y="0.5" width="2.6" height="8.1" fill="#253858"/>
</svg>
</body></html>
